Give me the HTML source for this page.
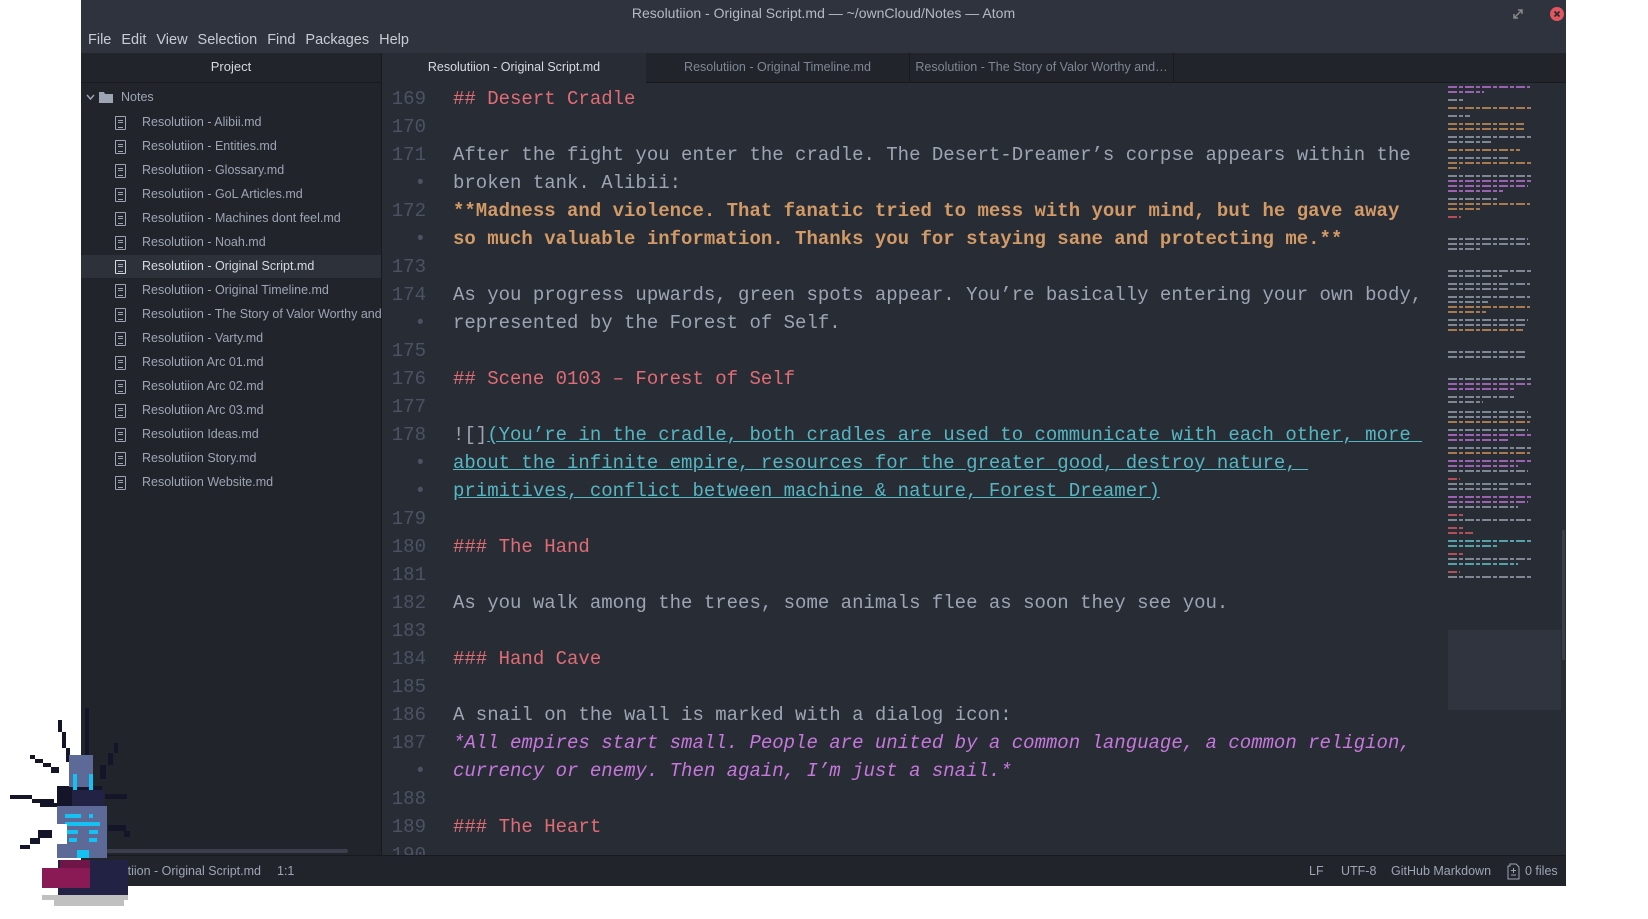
<!DOCTYPE html>
<html><head><meta charset="utf-8"><style>
*{margin:0;padding:0;box-sizing:border-box}
body{width:1648px;height:919px;background:#fff;position:relative;overflow:hidden;font-family:"Liberation Sans",sans-serif}
.win{position:absolute;left:81px;top:0;width:1485px;height:886px;background:#282c34;overflow:hidden}
.title{position:absolute;left:0;top:0;width:100%;height:28px;background:#2f333d;color:#b4bac4;font-size:14px;text-align:center;line-height:27px}
.menu{position:absolute;left:0;top:28px;width:100%;height:25px;background:#2f333d;color:#c8ccd4;font-size:14.5px;line-height:24px;padding-left:7px}
.menu span{margin-right:10px}
.side{position:absolute;left:0;top:53px;width:301px;height:802px;background:#21252b;border-right:1px solid #181a1f}
.side .hd{height:30px;line-height:28px;text-align:center;color:#d7dae0;font-size:13px;border-bottom:1px solid #181a1f}
.row{position:absolute;left:0;width:300px;height:23px;line-height:23px;font-size:12.5px;color:#9da5b4;white-space:nowrap;overflow:hidden}
.row.sel{background:#2c313a;color:#d7dae0}
.row .ic{position:absolute;left:34px;top:5px;width:11px;height:14px;border:1.3px solid #9da5b4;border-radius:1px}
.row .ic:before{content:"";position:absolute;left:2px;top:3px;width:5px;height:6px;border-top:1px solid #9da5b4;border-bottom:1px solid #9da5b4}
.row .ic:after{content:"";position:absolute;left:2px;top:5px;width:5px;height:1px;background:#9da5b4}
.row .t{position:absolute;left:61px}
.tabs{position:absolute;left:301px;top:53px;width:1184px;height:30px;background:#21252b;border-bottom:1px solid #181a1f}
.tab{position:absolute;top:0;height:30px;line-height:28px;font-size:12.5px;color:#7f8694;text-align:center}
.tab.act{background:#282c34;color:#d7dae0;height:31px}
.ed{position:absolute;left:301px;top:85px;width:1060px;font-family:"Liberation Mono",monospace;font-size:19px}
.l{height:28px;line-height:28px;position:relative}
.n{position:absolute;left:0;width:44px;text-align:right;color:#4b5263}
.c{position:absolute;left:71px;color:#9da5b4;white-space:pre}
.h{color:#e06c75}.b{color:#d19a66;font-weight:bold}.k{color:#56b6c2;text-decoration:underline}.i{color:#c678dd;font-style:italic}
.status{position:absolute;left:0;top:855px;width:100%;height:31px;background:#21252b;border-top:1px solid #181a1f;color:#9da5b4;font-size:12.5px;line-height:30px}
.mm{position:absolute;left:1367px;top:83px;width:100px;height:772px}
.mm div{height:2px;margin-top:3px;background:repeating-linear-gradient(90deg,var(--c) 0 9px,transparent 9px 11px,var(--c) 11px 15px,transparent 15px 17px)}
</style></head><body>
<div class="win">
<div class="title">Resolutiion - Original Script.md — ~/ownCloud/Notes — Atom
<svg style="position:absolute;left:1432px;top:9px" width="10" height="10"><path d="M1 9L9 1M5 1h4v4M1 5v4h4" stroke="#888" stroke-width="1.5" fill="none"/></svg>
<div style="position:absolute;left:1469px;top:7px;width:14px;height:14px;border-radius:50%;background:#e0575f"><svg width="14" height="14" style="position:absolute;left:0;top:0"><path d="M4.5 4.5l5 5M9.5 4.5l-5 5" stroke="#2b2b2b" stroke-width="1.8"/></svg></div>
</div>
<div class="menu"><span>File</span><span>Edit</span><span>View</span><span>Selection</span><span>Find</span><span>Packages</span><span>Help</span></div>
<div class="side"><div class="hd">Project</div>
<div class="row" style="top:33px;color:#9da5b4"><svg style="position:absolute;left:5px;top:8px" width="9" height="7"><path d="M1 1l3.5 4L8 1" stroke="#9da5b4" stroke-width="1.4" fill="none"/></svg><svg style="position:absolute;left:18px;top:5px" width="14" height="12"><path d="M0 1h5l1 2h8v9H0z" fill="#9da5b4"/></svg><span style="position:absolute;left:40px">Notes</span></div>
<div class="row" style="top:58px"><i class="ic"></i><span class="t">Resolutiion - Alibii.md</span></div>
<div class="row" style="top:82px"><i class="ic"></i><span class="t">Resolutiion - Entities.md</span></div>
<div class="row" style="top:106px"><i class="ic"></i><span class="t">Resolutiion - Glossary.md</span></div>
<div class="row" style="top:130px"><i class="ic"></i><span class="t">Resolutiion - GoL Articles.md</span></div>
<div class="row" style="top:154px"><i class="ic"></i><span class="t">Resolutiion - Machines dont feel.md</span></div>
<div class="row" style="top:178px"><i class="ic"></i><span class="t">Resolutiion - Noah.md</span></div>
<div class="row sel" style="top:202px"><i class="ic" style="border-color:#d7dae0"></i><span class="t">Resolutiion - Original Script.md</span></div>
<div class="row" style="top:226px"><i class="ic"></i><span class="t">Resolutiion - Original Timeline.md</span></div>
<div class="row" style="top:250px"><i class="ic"></i><span class="t">Resolutiion - The Story of Valor Worthy and Ma</span></div>
<div class="row" style="top:274px"><i class="ic"></i><span class="t">Resolutiion - Varty.md</span></div>
<div class="row" style="top:298px"><i class="ic"></i><span class="t">Resolutiion Arc 01.md</span></div>
<div class="row" style="top:322px"><i class="ic"></i><span class="t">Resolutiion Arc 02.md</span></div>
<div class="row" style="top:346px"><i class="ic"></i><span class="t">Resolutiion Arc 03.md</span></div>
<div class="row" style="top:370px"><i class="ic"></i><span class="t">Resolutiion Ideas.md</span></div>
<div class="row" style="top:394px"><i class="ic"></i><span class="t">Resolutiion Story.md</span></div>
<div class="row" style="top:418px"><i class="ic"></i><span class="t">Resolutiion Website.md</span></div>
<div style="position:absolute;left:20px;top:796px;width:247px;height:4px;border-radius:2px;background:#3a3f4b"></div>
</div>
<div class="tabs">
<div class="tab act" style="left:0;width:264px">Resolutiion - Original Script.md</div>
<div class="tab" style="left:264px;width:264px;border-right:1px solid #181a1f">Resolutiion - Original Timeline.md</div>
<div class="tab" style="left:528px;width:264px;border-right:1px solid #181a1f">Resolutiion - The Story of Valor Worthy and…</div>
</div>
<div class="ed"><div class="l"><span class="n">169</span><span class="c h">## Desert Cradle</span></div><div class="l"><span class="n">170</span></div><div class="l"><span class="n">171</span><span class="c">After the fight you enter the cradle. The Desert-Dreamer’s corpse appears within the</span></div><div class="l"><span class="n">•</span><span class="c">broken tank. Alibii:</span></div><div class="l"><span class="n">172</span><span class="c b">**Madness and violence. That fanatic tried to mess with your mind, but he gave away</span></div><div class="l"><span class="n">•</span><span class="c b">so much valuable information. Thanks you for staying sane and protecting me.**</span></div><div class="l"><span class="n">173</span></div><div class="l"><span class="n">174</span><span class="c">As you progress upwards, green spots appear. You’re basically entering your own body,</span></div><div class="l"><span class="n">•</span><span class="c">represented by the Forest of Self.</span></div><div class="l"><span class="n">175</span></div><div class="l"><span class="n">176</span><span class="c h">## Scene 0103 – Forest of Self</span></div><div class="l"><span class="n">177</span></div><div class="l"><span class="n">178</span><span class="c">![]<span class="k">(You’re in the cradle, both cradles are used to communicate with each other, more </span></span></div><div class="l"><span class="n">•</span><span class="c k">about the infinite empire, resources for the greater good, destroy nature, </span></div><div class="l"><span class="n">•</span><span class="c k">primitives, conflict between machine &amp; nature, Forest Dreamer)</span></div><div class="l"><span class="n">179</span></div><div class="l"><span class="n">180</span><span class="c h">### The Hand</span></div><div class="l"><span class="n">181</span></div><div class="l"><span class="n">182</span><span class="c">As you walk among the trees, some animals flee as soon they see you.</span></div><div class="l"><span class="n">183</span></div><div class="l"><span class="n">184</span><span class="c h">### Hand Cave</span></div><div class="l"><span class="n">185</span></div><div class="l"><span class="n">186</span><span class="c">A snail on the wall is marked with a dialog icon:</span></div><div class="l"><span class="n">187</span><span class="c i">*All empires start small. People are united by a common language, a common religion,</span></div><div class="l"><span class="n">•</span><span class="c i">currency or enemy. Then again, I’m just a snail.*</span></div><div class="l"><span class="n">188</span></div><div class="l"><span class="n">189</span><span class="c h">### The Heart</span></div><div class="l"><span class="n">190</span></div></div>
<div style="position:absolute;left:1367px;top:630px;width:113px;height:80px;background:#2f343e"></div>
<div class="mm">
<div style="--c:#9a62b0;width:82px"></div><div style="--c:#9a62b0;width:36px"></div><div style="--c:#7f8694;width:15px;margin-top:6px"></div>
<div style="--c:#a77a50;width:84px;margin-top:6px"></div><div style="--c:#7f8694;width:22px;margin-top:6px"></div>
<div style="--c:#a77a50;width:76px;margin-top:6px"></div><div style="--c:#a77a50;width:76px"></div>
<div style="--c:#7f8694;width:84px;margin-top:6px"></div><div style="--c:#7f8694;width:44px"></div>
<div style="--c:#a77a50;width:72px;margin-top:6px"></div>
<div style="--c:#7f8694;width:60px;margin-top:6px"></div><div style="--c:#a77a50;width:83px"></div><div style="--c:#a77a50;width:12px"></div>
<div style="--c:#7f8694;width:85px;margin-top:6px"></div><div style="--c:#9a62b0;width:84px"></div><div style="--c:#9a62b0;width:80px"></div><div style="--c:#9a62b0;width:55px"></div>
<div style="--c:#7f8694;width:50px;margin-top:6px"></div><div style="--c:#a77a50;width:82px"></div><div style="--c:#a77a50;width:33px"></div>
<div style="--c:#b0505a;width:13px;margin-top:6px"></div>
<div style="--c:#7f8694;width:80px;margin-top:20px"></div><div style="--c:#7f8694;width:82px"></div><div style="--c:#7f8694;width:32px"></div>
<div style="--c:#7f8694;width:85px;margin-top:20px"></div><div style="--c:#7f8694;width:54px"></div>
<div style="--c:#7f8694;width:82px;margin-top:6px"></div><div style="--c:#7f8694;width:62px"></div>
<div style="--c:#7f8694;width:82px;margin-top:6px"></div><div style="--c:#7f8694;width:40px"></div><div style="--c:#a77a50;width:82px"></div><div style="--c:#a77a50;width:38px"></div>
<div style="--c:#7f8694;width:80px;margin-top:6px"></div><div style="--c:#7f8694;width:78px"></div><div style="--c:#a77a50;width:75px"></div>
<div style="--c:#7f8694;width:78px;margin-top:20px"></div><div style="--c:#7f8694;width:77px"></div>
<div style="--c:#7f8694;width:85px;margin-top:20px"></div><div style="--c:#9a62b0;width:84px"></div><div style="--c:#9a62b0;width:68px"></div>
<div style="--c:#7f8694;width:66px;margin-top:6px"></div><div style="--c:#7f8694;width:35px"></div>
<div style="--c:#7f8694;width:80px;margin-top:8px"></div><div style="--c:#7f8694;width:84px"></div><div style="--c:#a77a50;width:82px"></div>
<div style="--c:#7f8694;width:80px;margin-top:6px"></div><div style="--c:#9a62b0;width:84px"></div><div style="--c:#9a62b0;width:60px"></div>
<div style="--c:#7f8694;width:84px;margin-top:6px"></div><div style="--c:#a77a50;width:82px"></div>
<div style="--c:#9a62b0;width:84px;margin-top:6px"></div><div style="--c:#9a62b0;width:70px"></div><div style="--c:#7f8694;width:80px"></div>
<div style="--c:#b0505a;width:12px;margin-top:6px"></div><div style="--c:#7f8694;width:84px"></div><div style="--c:#7f8694;width:60px"></div>
<div style="--c:#9a62b0;width:84px;margin-top:6px"></div><div style="--c:#9a62b0;width:80px"></div><div style="--c:#7f8694;width:70px"></div>
<div style="--c:#b0505a;width:15px;margin-top:6px"></div><div style="--c:#7f8694;width:84px"></div>
<div style="--c:#b0505a;width:15px;margin-top:6px"></div><div style="--c:#b0505a;width:25px"></div>
<div style="--c:#56a0a8;width:84px;margin-top:6px"></div><div style="--c:#56a0a8;width:50px"></div>
<div style="--c:#b0505a;width:15px;margin-top:6px"></div><div style="--c:#7f8694;width:84px"></div><div style="--c:#56a0a8;width:70px"></div>
<div style="--c:#b0505a;width:12px;margin-top:6px"></div><div style="--c:#7f8694;width:84px"></div>
</div>
<div style="position:absolute;left:1481px;top:530px;width:3px;height:130px;background:#3a3f4b"></div>
<div class="status"><span style="position:absolute;right:1305px;white-space:nowrap">Resolutiion - Original Script.md</span><span style="position:absolute;left:196px">1:1</span>
<span style="position:absolute;left:1228px">LF</span><span style="position:absolute;left:1260px">UTF-8</span><span style="position:absolute;left:1310px">GitHub Markdown</span>
<svg style="position:absolute;left:1426px;top:7px" width="13" height="17"><path d="M3 1h6l3 3v12H1V3h2z" stroke="#9da5b4" fill="none"/><path d="M6.5 5v5M4 7.5h5M4 12h5" stroke="#9da5b4"/></svg><span style="position:absolute;left:1444px">0 files</span></div>
</div>
<svg style="position:absolute;left:0;top:660px" width="140" height="259" shape-rendering="crispEdges">
<g fill="#15152a">
<rect x="85" y="48" width="4" height="48"/><rect x="58" y="60" width="4" height="12"/><rect x="62" y="72" width="4" height="16"/><rect x="66" y="88" width="4" height="14"/>
<rect x="30" y="95" width="5" height="4"/><rect x="35" y="99" width="8" height="4"/><rect x="43" y="103" width="8" height="4"/><rect x="51" y="107" width="8" height="6"/>
<rect x="10" y="135" width="22" height="4"/><rect x="32" y="139" width="22" height="4"/><rect x="40" y="143" width="20" height="4"/>
<rect x="114" y="83" width="4" height="10"/><rect x="108" y="93" width="5" height="12"/><rect x="100" y="105" width="6" height="14"/>
<rect x="105" y="134" width="22" height="5"/>
<rect x="20" y="185" width="10" height="4"/><rect x="30" y="178" width="10" height="6"/><rect x="38" y="170" width="14" height="8"/>
<rect x="108" y="165" width="18" height="6"/><rect x="124" y="171" width="6" height="6"/>
</g>
<rect x="57" y="126" width="45" height="30" fill="#15152a"/><rect x="72" y="130" width="32" height="24" fill="#222244"/>
<rect x="69" y="95" width="24" height="32" fill="#5d6996"/>
<rect x="73" y="114" width="4" height="16" fill="#16c0f0"/><rect x="89" y="114" width="4" height="16" fill="#16c0f0"/>
<rect x="57" y="146" width="50" height="52" fill="#5d6996"/>
<g fill="#16c0f0"><rect x="65" y="154" width="16" height="4"/><rect x="89" y="154" width="4" height="4"/><rect x="65" y="162" width="35" height="4"/><rect x="65" y="170" width="13" height="4"/><rect x="89" y="170" width="9" height="4"/><rect x="69" y="178" width="8" height="4"/><rect x="89" y="178" width="8" height="4"/><rect x="77" y="190" width="12" height="8"/></g>
<rect x="55" y="164" width="12" height="20" fill="#ffffff"/>
<rect x="58" y="200" width="70" height="40" fill="#222244"/>
<rect x="42" y="208" width="48" height="20" fill="#8a1a55"/><rect x="60" y="200" width="30" height="8" fill="#6e1648"/>
<rect x="42" y="235" width="86" height="5" fill="#c0c0c0"/><rect x="54" y="240" width="70" height="6" fill="#c0c0c0"/>
</svg>
</body></html>
